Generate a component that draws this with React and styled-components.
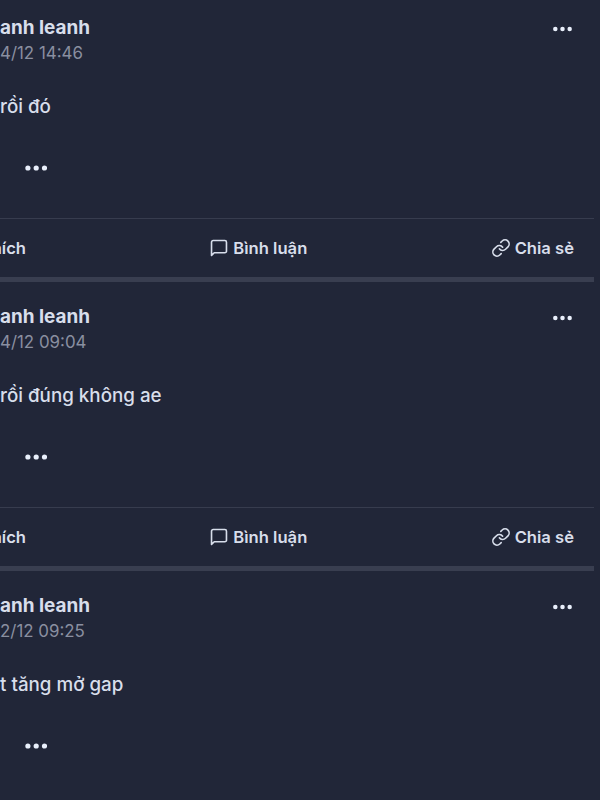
import styled, { createGlobalStyle } from "styled-components";

const posts = [
  { id: 1, name: "anh leanh", date: "4/12 14:46", text: "rồi đó" },
  { id: 2, name: "anh leanh", date: "4/12 09:04", text: "rồi đúng không ae" },
  { id: 3, name: "anh leanh", date: "2/12 09:25", text: "t tăng mở gap" },
];

const CommentIcon = () => (
  <Icon viewBox="0 0 20 20" $stroke={1.8}>
    <path d="M1.7 18.3V3.5a1.8 1.8 0 0 1 1.8-1.8h13a1.8 1.8 0 0 1 1.8 1.8v10a1.8 1.8 0 0 1-1.8 1.8H4.7z" />
  </Icon>
);

const LinkIcon = () => (
  <Icon viewBox="1 1 22 22" $stroke={2}>
    <path d="M10 13a5 5 0 0 0 7.54.54l3-3a5 5 0 0 0-7.07-7.07l-1.72 1.71" />
    <path d="M14 11a5 5 0 0 0-7.54-.54l-3 3a5 5 0 0 0 7.07 7.07l1.71-1.71" />
  </Icon>
);

const Dots = ({ width }) => (
  <DotsSvg viewBox="0 0 22 6" $width={width}>
    <circle cx="2.7" cy="3" r="2.6" />
    <circle cx="11" cy="3" r="2.6" />
    <circle cx="19.3" cy="3" r="2.6" />
  </DotsSvg>
);

function Post({ name, date, text }) {
  return (
    <Card>
      <Header>
        <div>
          <Name>{name}</Name>
          <PostDate>{date}</PostDate>
        </div>
        <MenuButton aria-label="Menu">
          <Dots width={19} />
        </MenuButton>
      </Header>
      <Text>{text}</Text>
      <More>
        <Dots width={22.4} />
      </More>
      <Actions>
        <LikeButton>Thích</LikeButton>
        <Action>
          <CommentIcon />
          Bình luận
        </Action>
        <Action>
          <LinkIcon />
          Chia sẻ
        </Action>
      </Actions>
    </Card>
  );
}

function App() {
  return (
    <>
      <GlobalStyle />
      <Feed>
        {posts.map((post) => (
          <Post key={post.id} {...post} />
        ))}
      </Feed>
    </>
  );
}

const GlobalStyle = createGlobalStyle`
  * {
    box-sizing: border-box;
  }

  body {
    margin: 0;
    background: #212638;
    color: #d8deeb;
    font-family: Inter, "Noto Sans", sans-serif;
  }
`;

const Feed = styled.main`
  width: 594px;
  height: 795px;
  overflow: hidden;
  display: flex;
  flex-direction: column;
  justify-content: flex-start;
`;

const Card = styled.article`
  flex: none;
  height: 289px;
  display: flex;
  flex-direction: column;
  border-bottom: 5px solid #393e50;

  &:first-child {
    margin-top: -7px;
  }
`;

const Header = styled.header`
  height: 77px;
  padding: 21px 20px 0 0;
  display: flex;
  justify-content: space-between;
`;

const Name = styled.h3`
  margin: 0;
  font-size: 18.9px;
  font-weight: 650;
  line-height: 28px;
`;

const PostDate = styled.p`
  margin: 0;
  font-size: 16.9px;
  line-height: 23px;
  color: #8a8fa0;
`;

const MenuButton = styled.button`
  height: 30px;
  padding: 0 2px;
  border: none;
  background: none;
  display: flex;
  align-items: center;
`;

const DotsSvg = styled.svg`
  width: ${(props) => props.$width}px;
  height: 6px;
  fill: #e9effb;
`;

const Text = styled.p`
  margin: 0;
  padding-top: 23px;
  font-size: 18.8px;
  font-weight: 520;
  line-height: 28px;
`;

const More = styled.div`
  height: 30px;
  margin-top: 32px;
  padding-left: 24.7px;
  display: flex;
  align-items: center;
`;

const Actions = styled.footer`
  margin-top: auto;
  height: 59px;
  padding-right: 20px;
  border-top: 1px solid #373c4e;
  display: flex;
  align-items: center;
  justify-content: space-between;
`;

const Action = styled.button`
  padding: 0;
  border: none;
  background: none;
  color: inherit;
  font-family: inherit;
  font-size: 16.6px;
  font-weight: 620;
  line-height: 26px;
  white-space: nowrap;
  display: flex;
  align-items: center;
  gap: 5px;
`;

const LikeButton = styled(Action)`
  width: 26px;
  overflow: hidden;
  justify-content: flex-end;
`;

const Icon = styled.svg`
  width: 18px;
  height: 18px;
  fill: none;
  stroke: currentColor;
  stroke-width: ${(props) => props.$stroke};
  stroke-linecap: round;
  stroke-linejoin: round;
`;

export default App;
